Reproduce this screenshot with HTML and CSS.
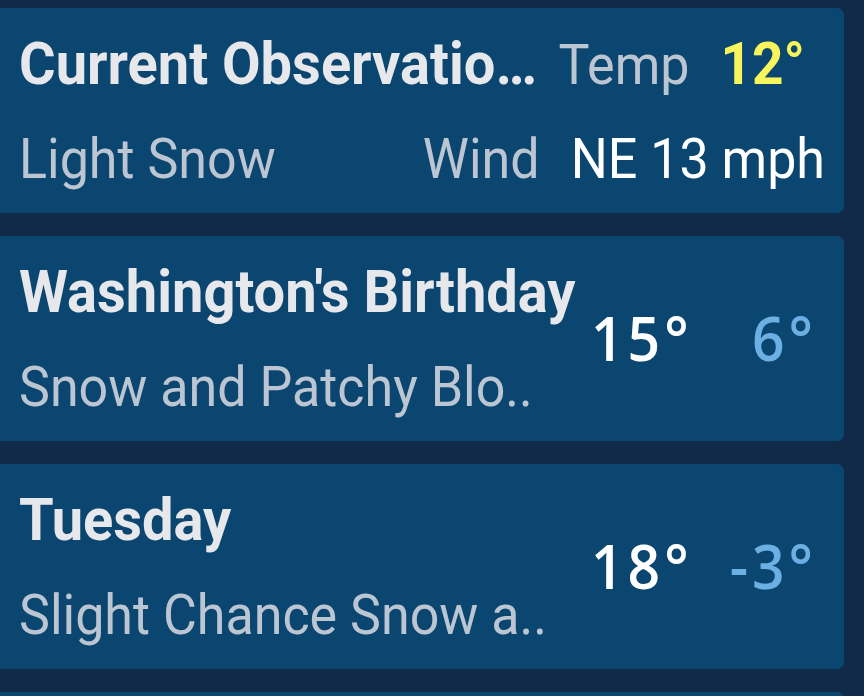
FILE: index.html
```html
<!DOCTYPE html>
<html lang="en">
<head>
<meta charset="utf-8">
<title>Forecast</title>
<link rel="stylesheet" href="styles.css">
</head>
<body>
<div class="list">
  <div class="card obs">
    <div class="obs-row">
      <div class="title">Current Observatio…</div>
      <div class="pair"><span class="label">Temp</span><span class="now">12°</span></div>
    </div>
    <div class="obs-row">
      <div class="sub">Light Snow</div>
      <div class="pair"><span class="label">Wind</span><span class="val">NE 13 mph</span></div>
    </div>
  </div>
  <div class="card day">
    <div class="text">
      <div class="title">Washington's Birthday</div>
      <div class="sub">Snow and Patchy Blo..</div>
    </div>
    <div class="temps"><span class="hi">15°</span><span class="lo">6°</span></div>
  </div>
  <div class="card day">
    <div class="text">
      <div class="title">Tuesday</div>
      <div class="sub">Slight Chance Snow a..</div>
    </div>
    <div class="temps"><span class="hi">18°</span><span class="lo">-3°</span></div>
  </div>
  <div class="card day"></div>
</div>
</body>
</html>
```
FILE: styles.css
```css
html, body {
  margin: 0;
  padding: 0;
  background: #112a48;
  overflow: hidden;
  height: 696px;
}
.list {
  display: flex;
  flex-direction: column;
  gap: 23px;
  padding: 8px 20px 0 0;
  margin-left: -12px;
}
.card {
  background: #0b4670;
  border-radius: 7px;
  height: 205px;
  box-sizing: border-box;
  padding: 9px 0 4px 31px;
  font-family: Roboto, "Liberation Sans", sans-serif;
  flex: none;
}
.obs-row {
  display: flex;
  align-items: baseline;
  height: 96px;
  line-height: 96px;
}
.obs-row .title, .obs-row .sub {
  flex: 1;
  white-space: nowrap;
}
.title {
  font-size: 56px;
  font-weight: 700;
  color: #e6e8ec;
  line-height: 96px;
  white-space: nowrap;
  transform: scaleY(1.07);
  transform-origin: 0 62px;
}
.sub {
  font-size: 52px;
  color: #bcc6d2;
  line-height: 96px;
  white-space: nowrap;
  transform: scaleY(1.07);
  transform-origin: 0 64px;
}
.pair {
  display: flex;
  align-items: baseline;
  gap: 31px;
}
.label {
  font-size: 52px;
  color: #bcc6d2;
  transform: scaleY(1.07);
  transform-origin: 0 64px;
}
.now {
  font-size: 55px;
  font-weight: 700;
  color: #f7f45c;
  margin-right: 39px;
  transform: scaleY(1.07);
  transform-origin: 0 62px;
}
.val {
  font-size: 52px;
  color: #ffffff;
  margin-right: 19px;
  transform: scaleY(1.07);
  transform-origin: 0 64px;
}
.day {
  display: flex;
  align-items: center;
}
.day .text {
  flex: 1;
  align-self: stretch;
}
.temps {
  display: flex;
  align-items: center;
  font-family: "Open Sans", "Noto Sans", sans-serif;
  font-weight: 600;
  font-size: 57px;
  padding-right: 27px;
  margin-top: -8px;
  transform: scaleY(1.08);
}
.hi {
  width: 130px;
  color: #ffffff;
  letter-spacing: 4px;
  margin-left: -4px;
}
.lo {
  width: 96px;
  text-align: right;
  color: #6cafe2;
  letter-spacing: 4px;
}
```
